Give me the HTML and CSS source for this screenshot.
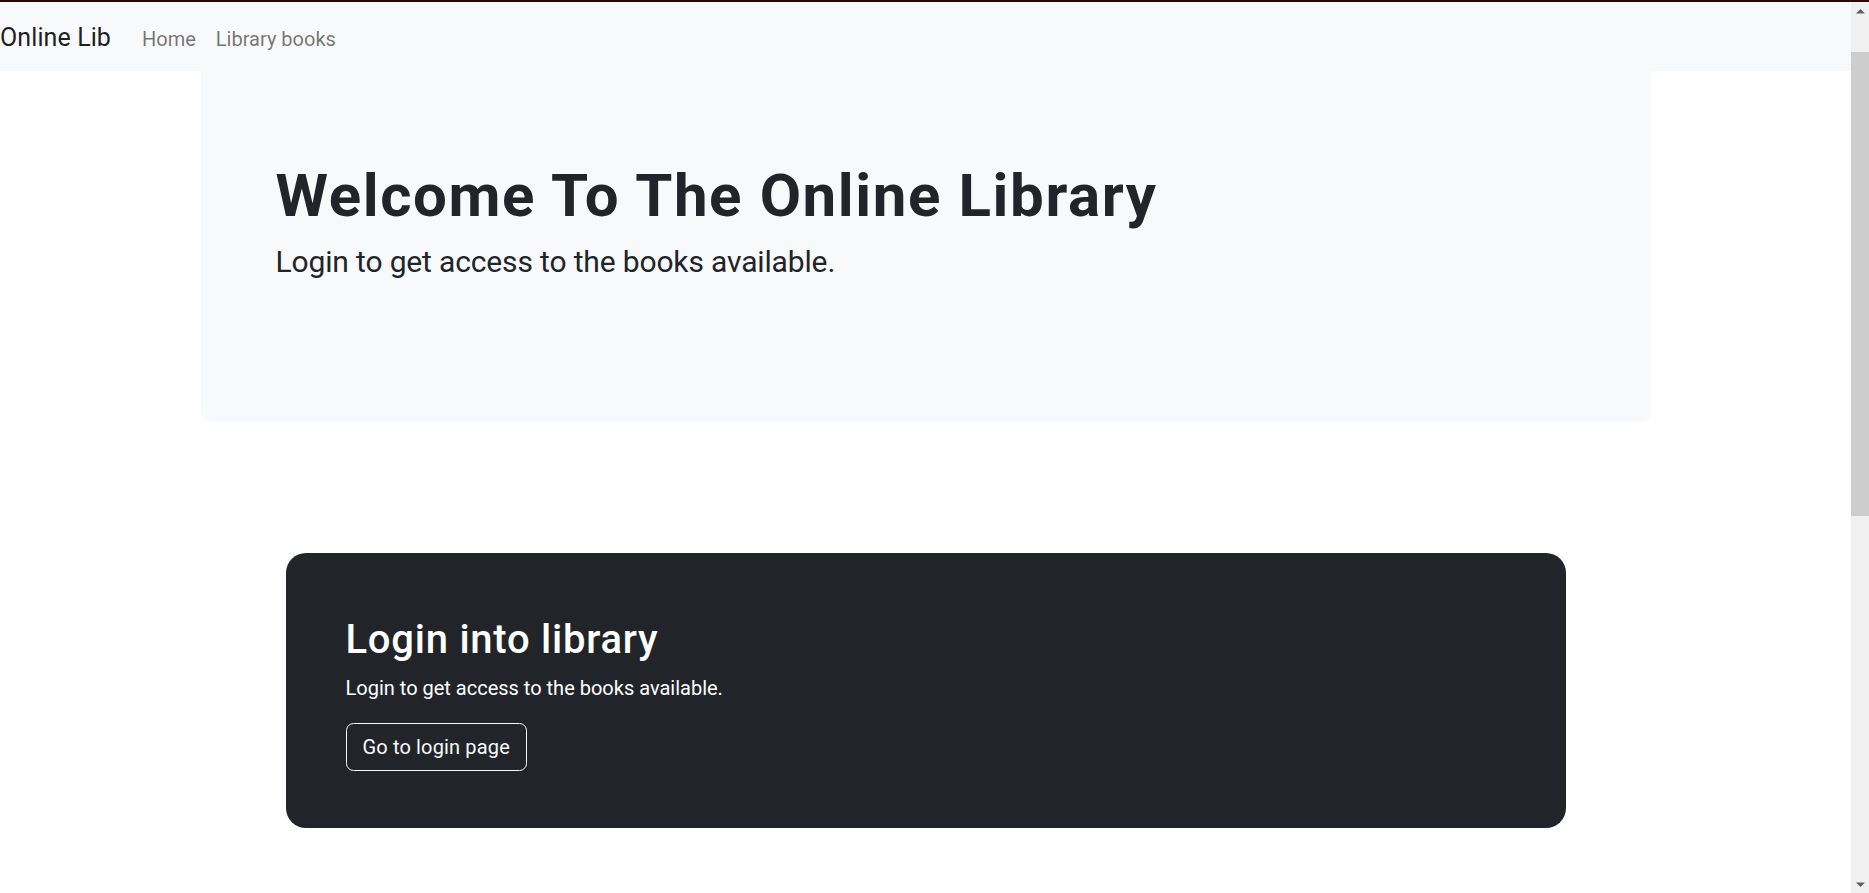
FILE: index.html
```html
<!DOCTYPE html>
<html lang="en">
<head>
<meta charset="utf-8">
<title>Online Lib</title>
<link rel="stylesheet" href="styles.css">
</head>
<body>
<div class="window">
  <div class="topline"></div>
  <div class="frame">
    <div class="page">
      <nav class="navbar">
        <a class="brand" href="#">Online Lib</a>
        <a class="nav-link" href="#">Home</a>
        <a class="nav-link" href="#">Library books</a>
      </nav>
      <section class="hero">
        <h1 class="hero-title">Welcome To The Online Library</h1>
        <p class="hero-sub">Login to get access to the books available.</p>
      </section>
      <section class="cta">
        <h2 class="cta-title">Login into library</h2>
        <p class="cta-text">Login to get access to the books available.</p>
        <a class="btn-outline" href="#">Go to login page</a>
      </section>
    </div>
    <div class="scrollbar">
      <div class="sb-btn">
        <svg width="9" height="6" viewBox="0 0 9 6"><polygon points="0,5.5 4.5,1 9,5.5" fill="#606060"/></svg>
      </div>
      <div class="sb-track"><div class="sb-thumb"></div></div>
      <div class="sb-btn">
        <svg width="9" height="6" viewBox="0 0 9 6"><polygon points="0,0.5 4.5,5 9,0.5" fill="#606060"/></svg>
      </div>
    </div>
  </div>
</div>
</body>
</html>
```

FILE: styles.css
```css
html, body {
  margin: 0;
  padding: 0;
  height: 100%;
  overflow: hidden;
  background: #ffffff;
}

body {
  font-family: "Segoe UI", Roboto, "Liberation Sans", sans-serif;
  color: #212529;
}

.window {
  display: flex;
  flex-direction: column;
  height: 100vh;
}

.topline {
  height: 2px;
  background: #2e0707;
  flex: none;
}

.frame {
  flex: 1;
  display: flex;
  min-height: 0;
}

.page {
  flex: 1;
  min-width: 0;
  overflow: hidden;
  background: #ffffff;
}

/* Navbar */
.navbar {
  height: 69px;
  box-sizing: border-box;
  padding-top: 17px;
  background: #f8f9fa;
  display: flex;
  align-items: baseline;
}

.brand {
  font-size: 25px;
  line-height: 37px;
  color: rgba(0, 0, 0, 0.9);
  text-decoration: none;
  margin-right: 21px;
  letter-spacing: 0.1px;
}

.nav-link {
  font-size: 20px;
  line-height: 30px;
  color: rgba(0, 0, 0, 0.55);
  text-decoration: none;
  padding: 0 10px;
}

/* Hero */
.hero {
  width: 1450px;
  margin: 0 auto;
  box-sizing: border-box;
  background: #f8f9fa;
  border-radius: 0 0 10px 10px;
  padding: 89px 75px 138px;
}

.hero-title {
  margin: 0 0 7px;
  font-size: 60px;
  line-height: 72px;
  font-weight: 700;
  letter-spacing: 1.6px;
  color: #212529;
}

.hero-sub {
  margin: 0;
  font-size: 30px;
  line-height: 45px;
  font-weight: 400;
  letter-spacing: -0.15px;
  color: #212529;
}

/* Call to action card */
.cta {
  width: 1280px;
  margin: 131px auto 0;
  box-sizing: border-box;
  background: #212529;
  border-radius: 20px;
  padding: 63px 60px 57px;
  color: #ffffff;
}

.cta-title {
  margin: 0 0 9px;
  font-size: 40px;
  line-height: 48px;
  font-weight: 500;
  letter-spacing: 0.75px;
}

.cta-text {
  margin: 0 0 20px;
  font-size: 20px;
  line-height: 30px;
}

.btn-outline {
  display: inline-block;
  font-size: 20px;
  line-height: 30px;
  padding: 8px 16px;
  border: 1px solid #f8f9fa;
  border-radius: 7.5px;
  color: #f8f9fa;
  text-decoration: none;
  letter-spacing: 0.15px;
}

/* Scrollbar */
.scrollbar {
  width: 18px;
  flex: none;
  background: #f0f0f0;
  display: flex;
  flex-direction: column;
}

.sb-btn {
  height: 17px;
  flex: none;
  display: flex;
  align-items: center;
  justify-content: center;
}

.sb-track {
  flex: 1;
  padding-top: 33px;
}

.sb-thumb {
  height: 464px;
  background: #cdcdcd;
}
```
